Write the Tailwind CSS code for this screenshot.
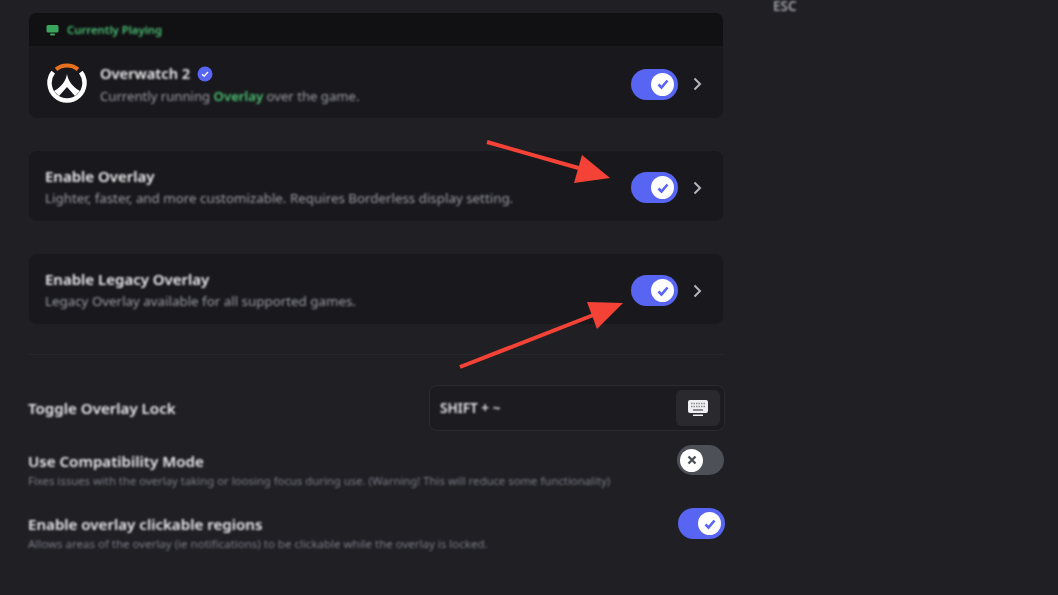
<!DOCTYPE html>
<html lang="en">
<head>
  <meta charset="UTF-8" />
  <title>Overlay settings</title>
  <script src="https://cdn.jsdelivr.net/npm/@tailwindcss/browser@4"></script>
</head>
<body class="bg-[#1f1f24] font-['Noto_Sans',sans-serif] overflow-hidden">
  <div class="relative w-[1058px] h-[595px] overflow-hidden">
    <div class="flex [&_p]:blur-[0.8px] [&_b]:blur-[0.8px]">
      <!-- settings column -->
      <div class="w-[697px] ml-[28px] pt-[13px] shrink-0">
        <div class="ml-px w-[694px] rounded-lg bg-[#19191d] overflow-hidden">
          <div class="h-[33px] bg-[#111114] flex items-center pl-[17px] gap-[8px] pt-[1px]">
            <svg class="w-[13px] h-[13px] blur-[0.5px]" viewBox="0 0 13 13"><rect x="0.5" y="1" width="12" height="7.5" rx="1.5" fill="#3ba55c"/><rect x="4" y="9.5" width="5" height="2" rx="1" fill="#3ba55c"/></svg>
            <b class="text-[11.3px] font-semibold text-[#4cc072]">Currently Playing</b>
          </div>
          <div class="h-[72px] flex items-center pl-[18px] pr-[21px] pt-[5px]">
            <svg class="w-[40px] h-[40px] shrink-0 -mt-[3px] blur-[0.5px]" viewBox="0 0 40 40">
              <path d="M33.800 9.200 A17.500 17.500 0 1 1 6.200 9.200" fill="none" stroke="#fff" stroke-width="4.500"/>
              <path d="M9 6.400 A17.500 17.500 0 0 1 31 6.400" fill="none" stroke="#e8701f" stroke-width="4"/>
              <path d="M20 11 C21 18 26 24 33 28 L28 33 L20 24 L12 33 L7 28 C14 24 19 18 20 11 Z" fill="#fff"/>
            </svg>
            <div class="ml-[13px] grow">
              <div class="flex items-center gap-[7px] h-[22px] -mt-[1px]">
                <b class="text-[14.7px] font-semibold text-[#f0f0f3]">Overwatch 2</b>
                <svg class="w-[16px] h-[16px] blur-[0.5px]" viewBox="0 0 16 16"><circle cx="8" cy="8" r="7.500" fill="#5865f2"/><path d="M5 8.200 L7.200 10.200 L11 6" fill="none" stroke="#fff" stroke-width="1.300"/></svg>
              </div>
              <p class="mt-[1px] text-[13.15px] leading-[20px] text-[#9a9ba3]">Currently running <span class="font-semibold text-[#4cc072]">Overlay</span> over the game.</p>
            </div>
            <div class="-mt-[1px] w-[47px] h-[31px] rounded-full bg-[#5865f2] flex items-center justify-end pr-[4px]">
              <span class="w-[23px] h-[23px] rounded-full bg-white flex items-center justify-center">
                <svg class="w-[14px] h-[14px]" viewBox="0 0 14 14"><path d="M2.500 7.500 L5.500 10.500 L11.500 3.500" fill="none" stroke="#5865f2" stroke-width="2.600"/></svg>
              </span>
            </div>
            <svg class="ml-[14px] -mt-[1px] w-[10px] h-[14px]" viewBox="0 0 10 14"><path d="M2.500 1.500 L8 7 L2.500 12.500" fill="none" stroke="#b5b6bc" stroke-width="2"/></svg>
          </div>
        </div>

        <div class="ml-px w-[694px] h-[70px] mt-[33px] rounded-lg bg-[#19191d] flex items-center pl-[16px] pr-[21px]">
          <div class="grow pt-[2px]">
            <p class="text-[15px] leading-[22px] font-semibold text-[#f0f0f3]">Enable Overlay</p>
            <p class="mt-[1px] text-[13.35px] leading-[21px] text-[#9a9ba3]">Lighter, faster, and more customizable. Requires Borderless display setting.</p>
          </div>
          <div class="mt-[3px] w-[47px] h-[31px] rounded-full bg-[#5865f2] flex items-center justify-end pr-[4px]">
            <span class="w-[23px] h-[23px] rounded-full bg-white flex items-center justify-center">
              <svg class="w-[14px] h-[14px]" viewBox="0 0 14 14"><path d="M2.500 7.500 L5.500 10.500 L11.500 3.500" fill="none" stroke="#5865f2" stroke-width="2.600"/></svg>
            </span>
          </div>
          <svg class="ml-[14px] mt-[3px] w-[10px] h-[14px]" viewBox="0 0 10 14"><path d="M2.500 1.500 L8 7 L2.500 12.500" fill="none" stroke="#b5b6bc" stroke-width="2"/></svg>
        </div>

        <div class="ml-px w-[694px] h-[70px] mt-[33px] rounded-lg bg-[#19191d] flex items-center pl-[16px] pr-[21px]">
          <div class="grow pt-[2px]">
            <p class="text-[15px] leading-[22px] font-semibold text-[#f0f0f3]">Enable Legacy Overlay</p>
            <p class="mt-[1px] text-[13.35px] leading-[21px] text-[#9a9ba3]">Legacy Overlay available for all supported games.</p>
          </div>
          <div class="mt-[3px] w-[47px] h-[31px] rounded-full bg-[#5865f2] flex items-center justify-end pr-[4px]">
            <span class="w-[23px] h-[23px] rounded-full bg-white flex items-center justify-center">
              <svg class="w-[14px] h-[14px]" viewBox="0 0 14 14"><path d="M2.500 7.500 L5.500 10.500 L11.500 3.500" fill="none" stroke="#5865f2" stroke-width="2.600"/></svg>
            </span>
          </div>
          <svg class="ml-[14px] mt-[3px] w-[10px] h-[14px]" viewBox="0 0 10 14"><path d="M2.500 1.500 L8 7 L2.500 12.500" fill="none" stroke="#b5b6bc" stroke-width="2"/></svg>
        </div>

        <div class="mt-[30px] h-px bg-[#26262b]"></div>

        <div class="mt-[30px] flex items-center justify-between h-[46px]">
          <b class="text-[15.1px] font-semibold text-[#ececef]">Toggle Overlay Lock</b>
          <div class="w-[296px] h-[46px] rounded-lg border border-[#2a2a30] bg-[#1c1c20] flex items-center justify-between pl-[10px] pr-[4px]">
            <b class="text-[13.6px] font-semibold text-[#ececef]">SHIFT + ~</b>
            <div class="w-[44px] h-[36px] rounded-md bg-[#29292e] flex items-center justify-center">
              <svg class="w-[22px] h-[18px] blur-[0.4px]" viewBox="0 0 22 18"><rect x="1" y="1" width="20" height="13" rx="2" fill="#f0f0f2"/><path d="M4 4.500 H18 M4 7.500 H18" stroke="#8b8c94" stroke-width="1.500" stroke-dasharray="1.500 1"/><rect x="6" y="10" width="10" height="2" fill="#8b8c94"/><rect x="6" y="15.500" width="10" height="1.500" fill="#f0f0f2"/></svg>
            </div>
          </div>
        </div>

        <div class="mt-[14px] flex justify-between">
          <div class="pt-[5px]">
            <p class="text-[15.1px] leading-[22px] font-semibold text-[#ececef]">Use Compatibility Mode</p>
            <p class="mt-[2px] text-[11.35px] leading-[14px] text-[#7c7d85]">Fixes issues with the overlay taking or loosing focus during use. (Warning! This will reduce some functionality)</p>
          </div>
          <div class="w-[47px] h-[30px] rounded-full bg-[#4e5058] flex items-center pl-[3px] mr-px">
            <span class="w-[23px] h-[23px] rounded-full bg-white flex items-center justify-center">
              <svg class="w-[14px] h-[14px]" viewBox="0 0 14 14"><path d="M3.500 3.500 L10.500 10.500 M10.500 3.500 L3.500 10.500" stroke="#4e5058" stroke-width="2.400"/></svg>
            </span>
          </div>
        </div>

        <div class="mt-[20px] flex justify-between">
          <div class="pt-[5px]">
            <p class="text-[15.1px] leading-[22px] font-semibold text-[#ececef]">Enable overlay clickable regions</p>
            <p class="mt-[2px] text-[11.5px] leading-[14px] text-[#7c7d85]">Allows areas of the overlay (ie notifications) to be clickable while the overlay is locked.</p>
          </div>
          <div class="w-[47px] h-[31px] rounded-full bg-[#5865f2] flex items-center justify-end pr-[4px]">
            <span class="w-[23px] h-[23px] rounded-full bg-white flex items-center justify-center">
              <svg class="w-[14px] h-[14px]" viewBox="0 0 14 14"><path d="M2.500 7.500 L5.500 10.500 L11.500 3.500" fill="none" stroke="#5865f2" stroke-width="2.600"/></svg>
            </span>
          </div>
        </div>
      </div>

      <!-- close hint -->
      <div class="ml-[48px] text-[13.5px] leading-[13px] font-semibold text-[#a3a4aa] blur-[0.8px]">ESC</div>
    </div>

    <!-- annotation arrows -->
    <svg class="absolute left-0 top-0 w-[1058px] h-[595px] pointer-events-none" viewBox="0 0 1058 595">
      <path d="M487 142 L582 169" stroke="#f44336" stroke-width="4" fill="none"/>
      <path d="M610 178 L582 155 L574 183 Z" fill="#f44336"/>
      <path d="M460 367 L596 314" stroke="#f44336" stroke-width="4" fill="none"/>
      <path d="M623 303 L587 302 L597 329 Z" fill="#f44336"/>
    </svg>
  </div>
</body>
</html>
